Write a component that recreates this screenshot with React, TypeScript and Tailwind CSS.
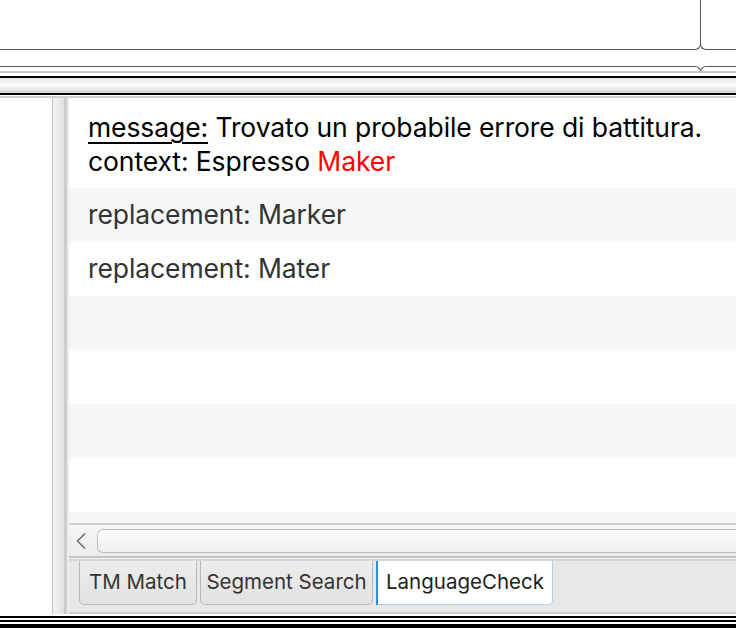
import React from "react";

const font = { fontFamily: "Inter, 'Noto Sans', 'Liberation Sans', sans-serif" };

function Rows() {
  const bands = ["bg-[#f7f7f7]", "bg-white", "bg-[#f7f7f7]", "bg-white", "bg-[#f7f7f7]", "bg-white", "bg-[#f7f7f7]"];
  return (
    <div className="flex-1 overflow-hidden bg-white">
      <div className="h-[88px] pl-[19px] pt-[10px] text-[26.5px] leading-[34px] tracking-[-0.1px] text-black">
        <div>
          <span className="underline decoration-[1.5px] underline-offset-[5px]">message:</span> Trovato un probabile errore di battitura.
        </div>
        <div>
          context: Espresso <span className="text-[#ff0000]">Maker</span>
        </div>
      </div>
      {bands.map((b, i) => (
        <div key={i} className={`h-[54px] ${b} flex items-center pl-[19px] text-[26.5px] tracking-[-0.1px] text-[#333]`}>
          {i === 0 ? "replacement: Marker" : i === 1 ? "replacement: Mater" : ""}
        </div>
      ))}
    </div>
  );
}

export default function App() {
  return (
    <div className="w-[736px] h-[628px] overflow-hidden bg-white flex flex-col" style={font}>
      {/* upper editor panes */}
      <div className="h-[50px] flex">
        <div className="flex-1 border-b border-r border-[#555] rounded-br-[6px]" />
        <div className="w-[36px] -ml-px border-b border-l border-[#555] rounded-bl-[6px]" />
      </div>
      <div className="h-[16px]" />
      <div className="h-[6px] flex">
        <div className="flex-1 border-t border-r border-[#555] rounded-tr-[6px]" />
        <div className="w-[36px] -ml-px border-t border-l border-[#555] rounded-tl-[6px]" />
      </div>
      {/* splitter */}
      <div className="h-[2px] bg-[#c8c8c8] -mt-[1px]" />
      <div className="h-[3px] bg-white" />
      <div className="h-[2px] bg-black" />
      <div className="h-[15px] bg-gradient-to-b from-[#e6e6e6] via-[#fafafa] to-[#d4d4d4]" />
      <div className="h-[2px] bg-black" />
      <div className="h-[1px] bg-white" />
      <div className="h-[2px] bg-[#d0d0d0]" />
      {/* lower pane */}
      <div className="flex-1 flex min-h-0">
        <div className="w-[52px] bg-white" />
        <div className="w-[1px] bg-[#bdbdbd]" />
        <div className="w-[11px] bg-gradient-to-r from-[#f4f4f4] to-[#e2e2e2]" />
        <div className="w-[3px] bg-[#cdcdcd]" />
        <div className="w-[2px] bg-[#ececec]" />
        <div className="flex-1 flex flex-col min-w-0 pt-[2px]">
          <Rows />
          <div className="h-[2px] bg-[#d0d0d0]" />
          {/* horizontal scrollbar */}
          <div className="h-[31px] bg-gradient-to-b from-[#f6f6f6] to-[#ececec] flex items-center">
            <svg width="28" height="24" viewBox="0 0 28 24" className="shrink-0">
              <path d="M16 4.5 L8.5 12 L16 19.5" fill="none" stroke="#6e6e6e" strokeWidth="1.5" />
            </svg>
            <div className="flex-1 h-[24px] border border-[#bdbdbd] rounded-l-[6px] border-r-0 bg-gradient-to-b from-[#fdfdfd] to-[#eeeeee]" />
          </div>
          <div className="h-[2px] bg-[#c4c4c4]" />
          <div className="h-[1px] bg-[#f4f4f4]" />
          {/* tabs */}
          <div className="h-[53px] bg-[#e8e8e8] border-t-[2px] border-[#d6d6d6] flex items-start pl-[10px] gap-[3px]">
            <div className="h-[44px] w-[118px] flex items-center justify-center border border-t-0 border-[#b9b9b9] rounded-b-[5px] bg-gradient-to-b from-[#ededed] to-[#e2e2e2] text-[20.5px] text-[#333]">
              TM Match
            </div>
            <div className="h-[44px] w-[173px] flex items-center justify-center border border-t-0 border-[#b9b9b9] rounded-b-[5px] bg-gradient-to-b from-[#ededed] to-[#e2e2e2] text-[20.5px] text-[#333]">
              Segment Search
            </div>
            <div className="h-[44px] flex">
              <div className="w-[2px] bg-[#2f8fd6]" />
              <div className="w-[175px] flex items-center justify-center border border-t-0 border-l-0 border-[#b5cfdc] rounded-br-[5px] bg-white text-[20.5px] text-[#222]">
                LanguageCheck
              </div>
            </div>
          </div>
          <div className="h-[2px] bg-[#cfcfcf]" />
        </div>
      </div>
      {/* window bottom rules */}
      <div className="h-[2px] bg-white" />
      <div className="h-[2px] bg-black" />
      <div className="h-[2px] bg-white" />
      <div className="h-[2px] bg-black" />
      <div className="h-[2px] bg-white" />
      <div className="h-[4px] bg-black" />
    </div>
  );
}
